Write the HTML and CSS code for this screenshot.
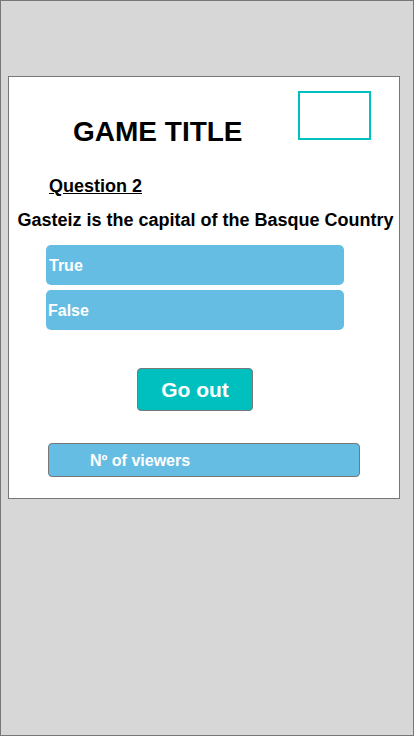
FILE: index.html
```html
<!DOCTYPE html>
<html lang="en">
<head>
<meta charset="utf-8">
<title>Game</title>
<link rel="stylesheet" href="styles.css">
</head>
<body>
<div class="frame">
  <div class="card">
    <div class="header">
      <h1 class="title">GAME TITLE</h1>
      <div class="slot"></div>
    </div>
    <h2 class="qnum">Question 2</h2>
    <p class="qtext">Gasteiz is the capital of the Basque Country</p>
    <div class="answer answer-first">True</div>
    <div class="answer answer-second">False</div>
    <div class="goout">Go out</div>
    <div class="viewers">Nº of viewers</div>
  </div>
</div>
</body>
</html>
```
FILE: styles.css
```css
* { box-sizing: border-box; }
html, body { margin: 0; padding: 0; }
body {
  font-family: "Liberation Sans", Arial, sans-serif;
  background: #d7d7d7;
}
.frame {
  width: 414px;
  height: 736px;
  border: 1px solid #777777;
  background: #d7d7d7;
  padding: 75px 0 0 7px;
}
.card {
  width: 392px;
  height: 423px;
  background: #ffffff;
  border: 1px solid #777777;
  display: flex;
  flex-direction: column;
  align-items: flex-start;
}
.header {
  display: flex;
  align-items: flex-start;
  width: 100%;
}
.title {
  margin: 39px 0 0 64px;
  font-size: 28px;
  line-height: 32px;
  font-weight: bold;
  color: #000;
}
.slot {
  margin: 14px 28px 0 auto;
  width: 73px;
  height: 49px;
  border: 2px solid #00bfbf;
}
.qnum {
  margin: 28px 0 0 40px;
  font-size: 18px;
  line-height: 21px;
  font-weight: bold;
  text-decoration: underline;
  color: #000;
}
.qtext {
  margin: 13px 0 0 0;
  width: 100%;
  text-align: center;
  font-size: 18px;
  line-height: 21px;
  font-weight: bold;
  color: #000;
  padding-left: 3px;
}
.answer {
  margin-left: 37px;
  width: 298px;
  height: 40px;
  background: #66bde3;
  border-radius: 5px;
  display: flex;
  align-items: center;
  padding-top: 2px;
  color: #ffffff;
  font-size: 16px;
  line-height: 18px;
  font-weight: bold;
}
.answer-first { margin-top: 14px; padding-left: 3px; }
.answer-second { margin-top: 5px; padding-left: 2px; }
.goout {
  margin: 38px 0 0 128px;
  width: 116px;
  height: 43px;
  background: #00bfbf;
  border: 1px solid #777777;
  border-radius: 4px;
  display: flex;
  align-items: center;
  justify-content: center;
  color: #ffffff;
  font-size: 21px;
  line-height: 24px;
  font-weight: bold;
}
.viewers {
  margin: 32px 0 0 39px;
  width: 312px;
  height: 34px;
  background: #66bde3;
  border: 1px solid #777777;
  border-radius: 4px;
  display: flex;
  align-items: center;
  padding: 2px 0 0 41px;
  color: #ffffff;
  font-size: 16px;
  line-height: 18px;
  font-weight: bold;
}
```
